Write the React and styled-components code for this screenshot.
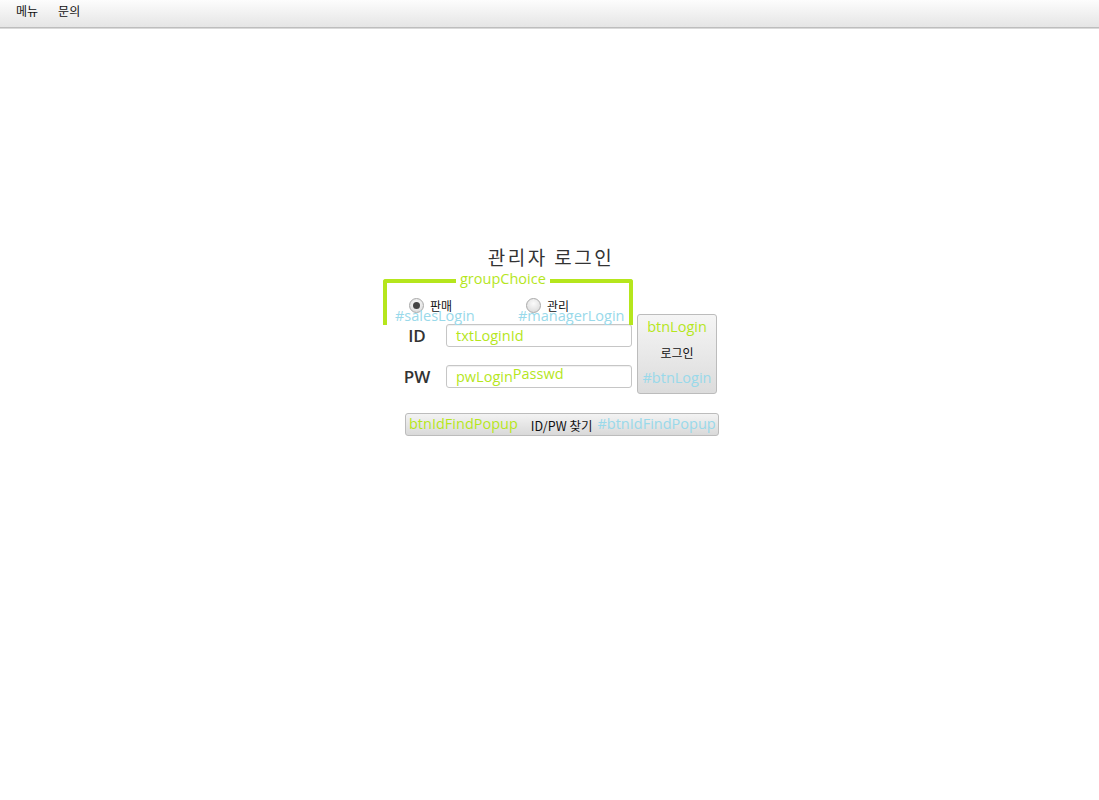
import React, { useState } from 'react';
import styled, { createGlobalStyle } from 'styled-components';

const LIME = '#b5e61d';
const SKY = '#99d9ea';

const GlobalStyle = createGlobalStyle`
  html, body {
    margin: 0;
    padding: 0;
    background: #ffffff;
  }
  body {
    font-family: 'Noto Sans CJK KR', 'Noto Sans', sans-serif;
  }
`;

const Page = styled.div`
  width: 1099px;
  height: 800px;
  background: #ffffff;
  overflow: hidden;
`;

const MenuBar = styled.div`
  height: 27px;
  display: flex;
  align-items: center;
  padding-left: 6px;
  background: linear-gradient(#fdfdfd, #e5e5e5);
  border-bottom: 1px solid #bdbdbd;
  box-shadow: 0 1px 0 #dadada;
`;

const MenuItem = styled.div`
  padding: 0 10px;
  font-size: 12px;
  color: #111;
  line-height: 20px;
  margin-top: -5px;
`;

const Panel = styled.div`
  width: 336px;
  margin-left: 383px;
  padding-top: 216px;
  display: flex;
  flex-direction: column;
`;

const Title = styled.div`
  text-align: center;
  font-size: 19px;
  letter-spacing: 2.5px;
  color: #333333;
  line-height: 26px;
  margin-left: 0;
  height: 35px;
`;

const TopRow = styled.div`
  display: flex;
  align-items: flex-start;
`;

const LeftCol = styled.div`
  width: 250px;
  flex-shrink: 0;
  display: flex;
  flex-direction: column;
`;

const GroupBox = styled.div`
  position: relative;
  box-sizing: border-box;
  width: 250px;
  height: 46px;
  border: 4px solid ${LIME};
  border-bottom: none;
  border-radius: 3px 3px 0 0;
  display: flex;
  padding: 15px 0 0 22px;
`;

const Legend = styled.span`
  position: absolute;
  top: -14px;
  left: 69px;
  padding: 0 4px;
  background: #ffffff;
  font-family: 'Open Sans', sans-serif;
  font-size: 14.5px;
  line-height: 20px;
  color: ${LIME};
`;

const RadioItem = styled.label`
  position: relative;
  display: flex;
  align-items: center;
  gap: 6px;
  width: ${({ $w }) => $w}px;
  height: 15px;
  font-size: 12px;
  color: #111;
  cursor: pointer;
`;

const RadioCircle = styled.span`
  width: 13px;
  height: 13px;
  border-radius: 50%;
  border: 1px solid #a9a9a9;
  background: radial-gradient(circle at 50% 35%, #fbfbfb, #d6d6d6);
  display: flex;
  align-items: center;
  justify-content: center;

  &::after {
    content: '';
    width: 7px;
    height: 7px;
    border-radius: 50%;
    background: #444;
    display: ${({ $checked }) => ($checked ? 'block' : 'none')};
  }
`;

const Tag = styled.span`
  position: absolute;
  left: ${({ $left }) => $left}px;
  top: ${({ $top }) => $top}px;
  white-space: nowrap;
  font-family: 'Open Sans', sans-serif;
  font-size: 14.5px;
  line-height: 18px;
  color: ${({ $color }) => $color};
  pointer-events: none;
`;

const FieldRow = styled.div`
  display: flex;
  align-items: center;
  padding-left: 12px;
  margin-top: ${({ $mt }) => $mt}px;
`;

const FieldLabel = styled.div`
  width: 44px;
  text-align: center;
  font-family: 'Open Sans', sans-serif;
  font-weight: 600;
  font-size: 17px;
  color: #333;
  line-height: 22px;
`;

const Field = styled.div`
  box-sizing: border-box;
  margin-left: 7px;
  width: 186px;
  height: 23px;
  border: 1px solid #c6c6c6;
  border-radius: 3px;
  background: #fff;
  display: flex;
  align-items: center;
  padding-left: 9px;
  font-family: 'Open Sans', sans-serif;
  font-size: 14.5px;
  color: ${LIME};
  white-space: nowrap;
  box-shadow: inset 0 1px 1px #f0f0f0;
`;

const Raised = styled.span`
  position: relative;
  top: -3px;
`;

const LoginButton = styled.button`
  flex-shrink: 0;
  margin: 35px 0 0 4px;
  width: 80px;
  height: 80px;
  border: 1px solid #bcbcbc;
  border-radius: 3px;
  background: linear-gradient(#f5f5f5, #dcdcdc);
  display: flex;
  flex-direction: column;
  align-items: center;
  justify-content: space-between;
  padding: 3px 0 6px;
  box-sizing: border-box;
  cursor: pointer;
`;

const ButtonTag = styled.span`
  font-family: 'Open Sans', sans-serif;
  font-size: 14.5px;
  line-height: 18px;
  color: ${({ $color }) => $color};
`;

const ButtonText = styled.span`
  font-family: 'Noto Sans CJK KR', sans-serif;
  font-size: 12px;
  color: #111;
  line-height: 16px;
`;

const FindButton = styled.button`
  margin: 19px 0 0 22px;
  width: 314px;
  height: 23px;
  border: 1px solid #bcbcbc;
  border-radius: 3px;
  background: linear-gradient(#f3f3f3, #d9d9d9);
  display: flex;
  align-items: center;
  padding: 0 0 2px 3px;
  box-sizing: border-box;
  white-space: nowrap;
  overflow: hidden;
  cursor: pointer;
`;

const FindText = styled.span`
  font-family: 'Noto Sans CJK KR', sans-serif;
  font-size: 12.5px;
  color: #111;
  margin: 3px 5px 0 13px;
`;

function App() {
  const [role, setRole] = useState('sales');

  return (
    <Page>
      <GlobalStyle />
      <MenuBar>
        <MenuItem>메뉴</MenuItem>
        <MenuItem>문의</MenuItem>
      </MenuBar>
      <Panel>
        <Title>관리자 로그인</Title>
        <TopRow>
          <LeftCol>
            <GroupBox>
              <Legend>groupChoice</Legend>
              <RadioItem $w={117} onClick={() => setRole('sales')}>
                <RadioCircle $checked={role === 'sales'} />
                판매
                <Tag $left={-14} $top={9} $color={SKY}>#salesLogin</Tag>
              </RadioItem>
              <RadioItem $w={100} onClick={() => setRole('manager')}>
                <RadioCircle $checked={role === 'manager'} />
                관리
                <Tag $left={-8} $top={9} $color={SKY}>#managerLogin</Tag>
              </RadioItem>
            </GroupBox>
            <FieldRow $mt={-1}>
              <FieldLabel>ID</FieldLabel>
              <Field>txtLoginId</Field>
            </FieldRow>
            <FieldRow $mt={18}>
              <FieldLabel>PW</FieldLabel>
              <Field>
                pwLogin<Raised>Passwd</Raised>
              </Field>
            </FieldRow>
          </LeftCol>
          <LoginButton>
            <ButtonTag $color={LIME}>btnLogin</ButtonTag>
            <ButtonText>로그인</ButtonText>
            <ButtonTag $color={SKY}>#btnLogin</ButtonTag>
          </LoginButton>
        </TopRow>
        <FindButton>
          <ButtonTag $color={LIME}>btnIdFindPopup</ButtonTag>
          <FindText>ID/PW 찾기</FindText>
          <ButtonTag $color={SKY}>#btnIdFindPopup</ButtonTag>
        </FindButton>
      </Panel>
    </Page>
  );
}

export default App;
